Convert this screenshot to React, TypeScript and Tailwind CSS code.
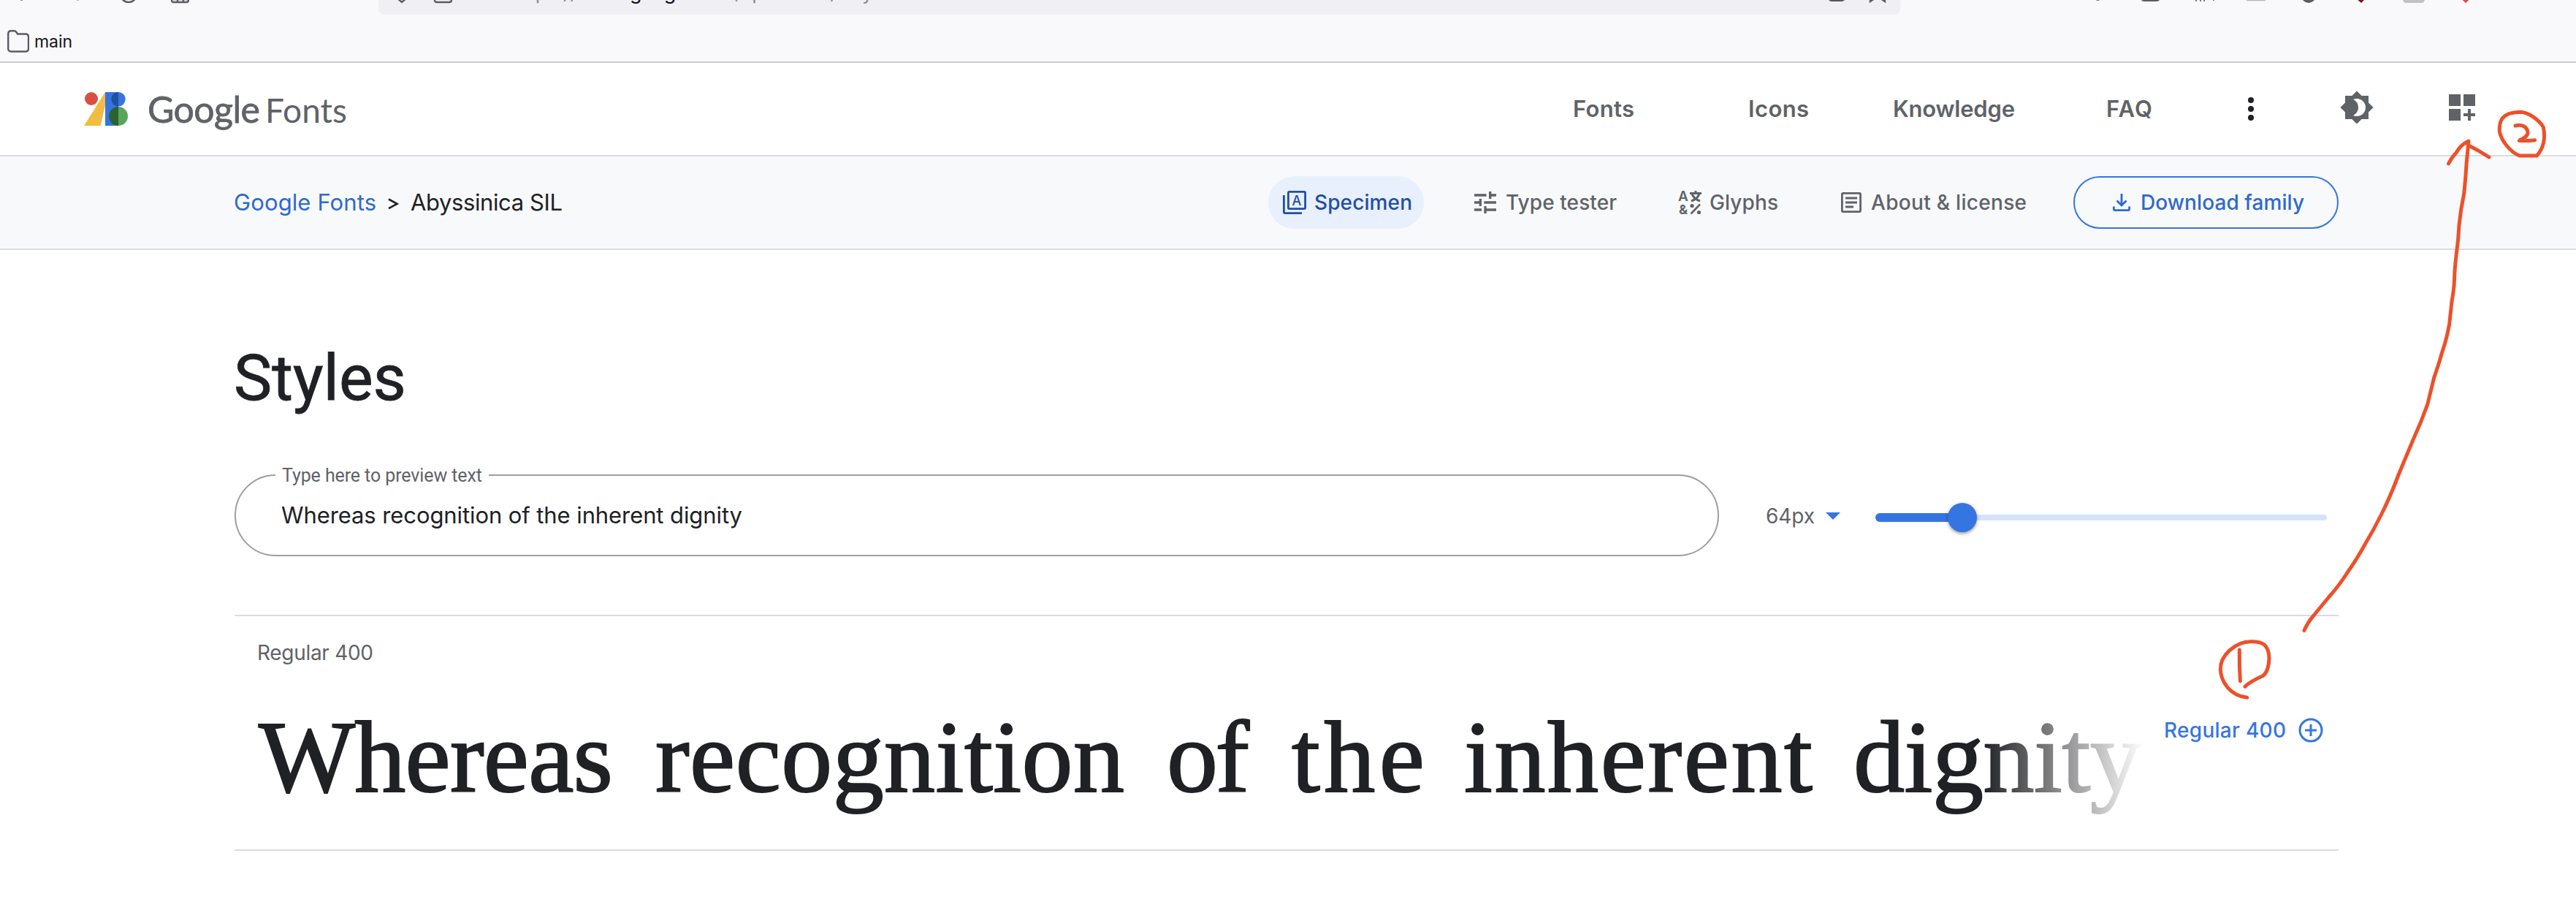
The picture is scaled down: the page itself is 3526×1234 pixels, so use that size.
import { useLayoutEffect, useRef, useState } from "react";
import { MdBrightness4 } from "react-icons/md";

/* Spreads one line of text evenly over the width of its box. */
function Fit({ text, className }: { text: string; className: string }) {
  const inner = useRef<HTMLSpanElement>(null);
  const [spacing, setSpacing] = useState(0);
  useLayoutEffect(() => {
    const measure = () => {
      const el = inner.current;
      if (!el || !el.parentElement) return;
      const before = el.style.letterSpacing;
      el.style.letterSpacing = "0px";
      const natural = el.getBoundingClientRect().width;
      el.style.letterSpacing = before;
      const box = el.parentElement.getBoundingClientRect().width;
      setSpacing((box - natural) / Math.max(1, text.length - 1));
    };
    measure();
    document.fonts.ready.then(measure);
  }, [text]);
  return (
    <span className={`block shrink-0 whitespace-nowrap ${className}`}>
      <span ref={inner} style={{ letterSpacing: `${spacing}px` }}>{text}</span>
    </span>
  );
}

function BrowserBar() {
  return (
    <div className="relative h-[86px] overflow-hidden border-b-2 border-[#cccccf] bg-[#f9f9fb]">
      <div className="ml-[518px] flex h-5 w-[2083px] overflow-hidden rounded-b-[8px] bg-[#f0f0f4] pl-[182px] text-[27px] leading-[18px] text-[#8a8a92]">
        <Fit text="https://fonts." className="-mt-[19px] w-[162px]" />
        <Fit text="google.com" className="-mt-[19px] w-[144px] text-[#15141a]" />
        <Fit text="/specimen/Ab" className="-mt-[19px] w-[174px]" />
        <Fit text="yssinica+SIL" className="-mt-[19px] w-[150px]" />
      </div>
      <svg className="absolute left-0 top-0" width="3526" height="8" fill="none" stroke="#5b5b66" strokeWidth="2.4">
        <path d="M28 0h3" strokeWidth="1.5" />
        <path d="M105 0h3" stroke="#b5b5bb" strokeWidth="2" />
        <circle cx="176" cy="-8" r="11" />
        <path d="M235 -4v4q0 3 3 3h17q3 0 3-3v-4M243 -2v5M251 -2v5M235 -1h23" />
        <path d="M543 -3l7 6 7-6" />
        <path d="M595 -4v4q0 3 3 3h17q3 0 3-3v-4" />
        <path d="M2503 0q2 2 4 2h14q2 0 4-2z" fill="#55555e" stroke="none" />
        <path d="M2560 -3v5l6-4M2580 -3v5l-6-4" />
        <path d="M2869 0q2.500 2 5 0z" fill="#5b5b66" stroke="none" />
        <path d="M2931 0q1 2 4 2h17q3 0 4-2z" fill="#5b5b66" stroke="none" />
        <path d="M3006 -2v4M3012 -2v4M3017 -2v4M3030 -2v3" strokeWidth="1.6" />
        <path d="M3075 0h26" stroke="#b1b1b8" strokeWidth="2.4" />
        <circle cx="3160" cy="-6" r="10" fill="#5b5b66" stroke="none" />
        <path d="M3225 -2l7 6 6-6z" fill="#7c1512" stroke="none" />
        <path d="M3289 0q1 4 4 4h22q3 0 4-4z" fill="#c2c2c4" stroke="none" />
        <path d="M3370 -2l5 5 5-5M3373 0h5" stroke="#e2483f" strokeWidth="1.8" />
      </svg>
      <div className="mt-[21px] flex items-center pl-[10px]">
        <svg width="30" height="35" viewBox="0 0 30 35" fill="none" stroke="#5b5b66" strokeWidth="2.4">
          <path d="M1.2 5.2q0-4 4-4h4.300q1.600 0 2.500 1.300l2 3h11q4 0 4 4v16q0 4-4 4H5.200q-4 0-4-4z" />
        </svg>
        <Fit text="main" className="-mt-[3px] ml-[7px] w-[52px] text-[23px] leading-7 text-[#15141a]" />
      </div>
    </div>
  );
}

function Header() {
  return (
    <header className="flex h-[128px] items-center border-b-2 border-[#dadce0] bg-white pr-[132px] pl-[115px] text-[#5f6368]">
      <svg width="60" height="46" viewBox="0 0 60 46">
        <path d="M29 0v18L22.500 46H0z" fill="#f2bc42" />
        <circle cx="10" cy="9" r="9" fill="#d95040" />
        <path d="M29 0h18v46H29z" fill="#3575e2" />
        <path d="M47 0a9.700 9.700 0 0 1 0 19.500z" fill="#3575e2" />
        <path d="M47 0a9.700 9.700 0 0 0 0 19.500z" fill="#234f9f" />
        <path d="M47 20a13 13 0 0 1 0 26z" fill="#58a55c" />
        <path d="M47 20a13 13 0 0 0 0 26z" fill="#2b6331" />
      </svg>
      <div className="mt-[1px] ml-[27px] flex items-baseline font-['Lato',sans-serif]">
        <Fit text="Google" className="w-[154px] text-[50px] leading-[64px] [-webkit-text-stroke:0.8px_#5f6368]" />
        <Fit text="Fonts" className="ml-[7px] w-[112px] text-[46px] leading-[64px]" />
      </div>
      <nav className="ml-auto flex items-center text-[31px] leading-10 font-[600]">
        <Fit text="Fonts" className="w-[84px]" />
        <Fit text="Icons" className="ml-[156px] w-[83px]" />
        <Fit text="Knowledge" className="ml-[115px] w-[167px]" />
        <Fit text="FAQ" className="ml-[125px] w-[63px]" />
        <svg className="ml-[129px]" width="12" height="34" fill="#202124">
          <circle cx="6" cy="5" r="4" />
          <circle cx="6" cy="17" r="4" />
          <circle cx="6" cy="29" r="4" />
        </svg>
        <MdBrightness4 className="-mt-1 ml-[115px] size-12" />
        <svg className="-mt-1 ml-[96px]" width="48" height="48" viewBox="0 0 24 24" fill="currentColor">
          <path d="M3 3h8v8H3zM13 3h8v8h-8zM3 13h8v8H3zM18 13h-2v3h-3v2h3v3h2v-3h3v-2h-3z" />
        </svg>
      </nav>
    </header>
  );
}

function SubNav() {
  return (
    <div className="flex h-[128px] items-center border-b-2 border-[#dadce0] bg-[#f8f9fb] pr-[325px] pl-[320px] text-[28px] leading-10 font-[450] text-[#5f6368]">
      <Fit text="Google Fonts" className="w-[195px] text-[31px] font-normal text-[#2f69cd]" />
      <svg className="mt-[3px] ml-[16px]" width="15" height="16" fill="none" stroke="#202124" strokeWidth="2.600">
        <path d="M1 1.500l11.500 6.300L1 14.100" />
      </svg>
      <Fit text="Abyssinica SIL" className="ml-[16px] w-[208px] text-[31px] font-normal text-[#202124]" />
      <div className="ml-auto flex items-center">
        <div className="flex h-[72px] w-[213px] items-center rounded-full bg-[#e8effd] pl-5 text-[#234fa0]">
          <svg width="32" height="32" viewBox="0 0 32 32" fill="none" stroke="currentColor" strokeWidth="2.800">
            <rect x="7.400" y="1.400" width="23.200" height="23.200" rx="1.500" />
            <path d="M1.400 6v23.100q0 1.500 1.500 1.500H26" />
            <text x="19" y="19.500" textAnchor="middle" fontSize="18" fontWeight="500" fill="currentColor" stroke="none">A</text>
          </svg>
          <Fit text="Specimen" className="ml-[11px] w-[134px]" />
        </div>
        <svg className="ml-[69px]" width="30" height="30" viewBox="3 3 18 18" fill="currentColor">
          <path d="M3 17v2h6v-2H3zM3 5v2h10V5H3zm10 16v-2h8v-2h-8v-2h-2v6h2zM7 9v2H3v2h4v2h2V9H7zm14 4v-2H11v2h10zm-6-4h2V7h4V5h-4V3h-2v6z" />
        </svg>
        <Fit text="Type tester" className="ml-[13px] w-[152px]" />
        <svg className="ml-[84px]" width="32" height="34" viewBox="0 0 32 34" fill="currentColor" fontWeight="700">
          <text x="7" y="15" textAnchor="middle" fontSize="19" fontWeight="600">A</text>
          <path d="M16 4.500h16M24 1v4M19 5q2 7 11 10M29 5q-2 7-11 10" fill="none" stroke="currentColor" strokeWidth="2.900" />
          <text x="7" y="33" textAnchor="middle" fontSize="18">&amp;</text>
          <path d="M30 19.500L17.500 32.500" stroke="currentColor" strokeWidth="2.600" />
          <circle cx="19" cy="21.500" r="2.600" />
          <circle cx="28.500" cy="30.500" r="2.600" />
        </svg>
        <Fit text="Glyphs" className="ml-[11px] w-[94px]" />
        <svg className="ml-[86px]" width="28" height="28" viewBox="0 0 28 28" fill="none" stroke="currentColor" strokeWidth="2.800">
          <rect x="1.400" y="1.400" width="25.200" height="25.200" rx="1.500" />
          <path d="M6 8h16M6 14h16M6 20h11" />
        </svg>
        <Fit text="About &amp; license" className="ml-[13px] w-[213px]" />
        <div className="ml-[64px] flex h-[72px] w-[363px] items-center rounded-full border-2 border-[#3575e2] pl-[52px] text-[#2f69cd]">
          <svg width="24" height="24" viewBox="0 0 24 24" fill="none" stroke="currentColor" strokeWidth="2.800">
            <path d="M12 0v16M5.500 9.500L12 16l6.500-6.500M1.400 17.500v3.600q0 1.500 1.500 1.500h18.200q1.500 0 1.500-1.500v-3.600" />
          </svg>
          <Fit text="Download family" className="ml-[14px] w-[224px] font-medium" />
        </div>
      </div>
    </div>
  );
}

function PreviewControls() {
  return (
    <div className="mt-[82px] flex h-[112px] items-center">
      <div className="relative flex h-[112px] w-[2032px] items-center rounded-full border-2 border-[#9e9e9e] pl-[62px]">
        <div className="absolute -top-[18px] left-[54px] bg-white px-[9px]">
          <Fit text="Type here to preview text" className="w-[274px] font-['Roboto',sans-serif] text-[25px] leading-9 text-[#5f6368]" />
        </div>
        <Fit text="Whereas recognition of the inherent dignity" className="w-[631px] text-[31px] leading-10 text-[#202124]" />
      </div>
      <Fit text="64px" className="mt-[2px] ml-[64px] w-[67px] text-[28px] leading-10 text-[#5f6368]" />
      <svg className="mt-[2px] ml-[15px]" width="20" height="10">
        <path d="M0 0h20L10 10z" fill="#3575e2" />
      </svg>
      <div className="relative mt-[6px] ml-[48px] flex h-10 w-[618px] items-center">
        <div className="h-3 w-[119px] rounded-l-full bg-[#3575e2]" />
        <div className="h-2 grow rounded-r-full bg-[#d5e2fa]" />
        <div className="absolute left-[99px] size-10 rounded-full bg-[#3575e2] shadow-[0_2px_4px_rgba(0,0,0,0.4)]" />
      </div>
    </div>
  );
}

function StyleRow() {
  return (
    <div className="mt-20 w-[2880px] border-y-2 border-[#dadce0] pt-[30px] pb-[46px]">
      <Fit text="Regular 400" className="ml-[31px] w-[159px] text-[28px] leading-10 text-[#5f6368]" />
      <div className="mt-[43px] flex h-[160px] items-start">
        <div className="relative ml-[33px] flex font-['Liberation_Serif',serif] text-[140px] leading-[160px] text-[#202124] [-webkit-text-stroke:2px_#202124]">
          <Fit text="Whereas" className="w-[485px]" />
          <Fit text="recognition" className="ml-[58px] w-[642px]" />
          <Fit text="of" className="ml-[58px] w-[113px]" />
          <Fit text="the" className="ml-[58px] w-[182px]" />
          <Fit text="inherent" className="ml-[54px] w-[477px]" />
          <Fit text="dignity" className="ml-[56px] w-[394px]" />
          <div className="absolute inset-y-0 -right-1 w-[222px] bg-linear-to-r from-white/0 to-white" />
        </div>
        <div className="mt-[23px] ml-[31px] flex items-center text-[#3575e2]">
          <Fit text="Regular 400" className="w-[167px] text-[28px] leading-10 font-[450]" />
          <svg className="ml-[17px]" width="34" height="34" viewBox="0 0 34 34" fill="none" stroke="currentColor" strokeWidth="3">
            <circle cx="17" cy="17" r="15" />
            <path d="M17 9v16M9 17h16" />
          </svg>
        </div>
      </div>
    </div>
  );
}

/* Hand-drawn notes over the page: the numbered circles and the arrow. */
function Notes() {
  return (
    <svg className="pointer-events-none absolute inset-0" width="3526" height="1234" fill="none" stroke="#ec512b" strokeWidth="5" strokeLinecap="round" strokeLinejoin="round">
      <path d="M3154 862.600Q3159 851 3167 842L3186.700 818Q3202 801 3213.300 783Q3226 765 3236.700 745.500Q3249 725 3260 703Q3272 679 3283.300 649L3303.300 601Q3314 578 3322.700 553.400Q3327 536 3331.700 516.600Q3338 499 3343.300 480Q3349 464 3352.700 443L3356 412.500Q3359 395 3359.300 386.500Q3360 366 3362 350Q3365 329 3366 308Q3368 287 3372.700 265Q3375 243 3376 225L3379 193Q3368 198 3362 209Q3356 215 3351.500 224" />
      <path d="M3380 199.500Q3393 206 3407 215" />
      <g transform="translate(3180 100) scale(0.333333)" strokeWidth="15">
        <path d="M877 339H806C770 325 732 280 724 240C722 195 732 163 808 160C840 160 885 190 904 222C912 262 908 305 877 339" />
        <path d="M789 216C815 209 838 219 840 244C840 264 815 269 805 277Q835 279 869 275" />
      </g>
      <g transform="translate(3010 860) scale(0.333333)" strokeWidth="15">
        <path d="M197 283C130 275 89 220 88 165C88 110 150 52 214 53C260 52 286 65 288 121C287 155 277 183 262 194C235 206 210 217 189 238" />
        <path d="M166 87Q165 150 169 215" />
      </g>
    </svg>
  );
}

export default function App() {
  return (
    <div className="relative h-[1234px] w-[3526px] overflow-hidden bg-white font-['Inter',sans-serif]">
      <BrowserBar />
      <Header />
      <SubNav />
      <main className="pt-[125px] pl-[321px]">
        <h1>
          <Fit text="Styles" className="-ml-[1px] w-[236px] font-['Roboto',sans-serif] text-[88px] leading-[100px] text-[#202124] [-webkit-text-stroke:0.8px_#202124]" />
        </h1>
        <PreviewControls />
        <StyleRow />
      </main>
      <Notes />
    </div>
  );
}
